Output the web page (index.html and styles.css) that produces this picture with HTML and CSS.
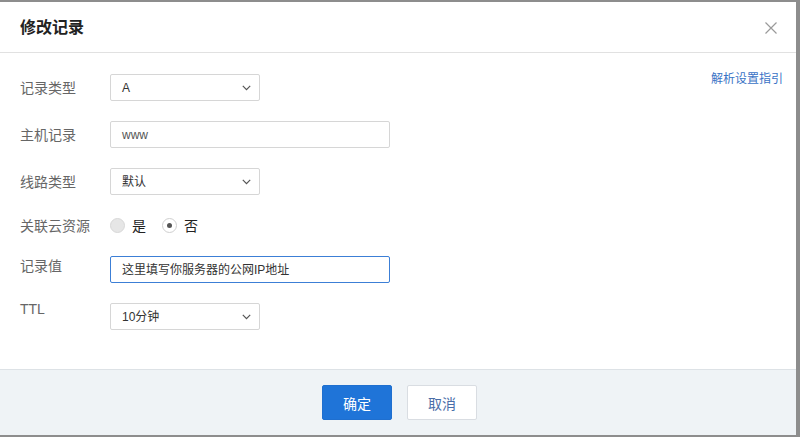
FILE: index.html
```html
<!DOCTYPE html>
<html lang="zh-CN">
<head>
<meta charset="utf-8">
<title>修改记录</title>
<link rel="stylesheet" href="styles.css">
</head>
<body>
<div class="dialog">
  <div class="dlg-header">
    <h2 class="dlg-title">修改记录</h2>
    <span class="dlg-close" aria-label="关闭">
      <svg width="12" height="12" viewBox="0 0 12 12"><path d="M0.5 0.5L11.5 11.5M11.5 0.5L0.5 11.5" stroke="#9a9a9a" stroke-width="1.2" fill="none"/></svg>
    </span>
  </div>
  <div class="dlg-body">
    <div class="form">
      <div class="row">
        <div class="label">记录类型</div>
        <div class="select"><span class="val">A</span><svg class="chev" width="9" height="6" viewBox="0 0 9 6"><path d="M0.8 0.8L4.5 4.6L8.2 0.8" stroke="#555" stroke-width="1.2" fill="none"/></svg></div>
      </div>
      <div class="row">
        <div class="label">主机记录</div>
        <div class="input"><span class="val muted">www</span></div>
      </div>
      <div class="row">
        <div class="label">线路类型</div>
        <div class="select"><span class="val">默认</span><svg class="chev" width="9" height="6" viewBox="0 0 9 6"><path d="M0.8 0.8L4.5 4.6L8.2 0.8" stroke="#555" stroke-width="1.2" fill="none"/></svg></div>
      </div>
      <div class="row row-radio">
        <div class="label">关联云资源</div>
        <div class="radios">
          <span class="radio off"></span><span class="radio-text">是</span>
          <span class="radio on"><span class="dot"></span></span><span class="radio-text">否</span>
        </div>
      </div>
      <div class="row row-top">
        <div class="label">记录值</div>
        <div class="input focus"><span class="val">这里填写你服务器的公网IP地址</span></div>
      </div>
      <div class="row row-top">
        <div class="label label-raised">TTL</div>
        <div class="select"><span class="val">10分钟</span><svg class="chev" width="9" height="6" viewBox="0 0 9 6"><path d="M0.8 0.8L4.5 4.6L8.2 0.8" stroke="#555" stroke-width="1.2" fill="none"/></svg></div>
      </div>
    </div>
    <a class="guide" href="#">解析设置指引</a>
  </div>
  <div class="dlg-footer">
    <button class="btn btn-primary">确定</button>
    <button class="btn btn-default">取消</button>
  </div>
</div>
</body>
</html>
```
FILE: styles.css
```css
* { box-sizing: border-box; }
html, body {
  margin: 0;
  padding: 0;
  width: 800px;
  height: 437px;
  overflow: hidden;
  background: #8d8d8d;
  font-family: "Liberation Sans", "Noto Sans CJK SC", sans-serif;
}
.dialog {
  margin-top: 2px;
  width: 796px;
  height: 433px;
  background: #fff;
  display: flex;
  flex-direction: column;
}
.dlg-header {
  height: 51px;
  border-bottom: 1px solid #e1e1e1;
  display: flex;
  align-items: center;
  justify-content: space-between;
  padding: 2px 19px 0 20px;
  flex: none;
}
.dlg-title {
  margin: 0;
  font-size: 16px;
  font-weight: bold;
  color: #222;
  line-height: 20px;
}
.dlg-close {
  display: flex;
  width: 12px;
  height: 12px;
}
.dlg-body {
  flex: 1;
  display: flex;
  justify-content: space-between;
  padding: 21px 13px 0 20px;
}
.form {
  display: flex;
  flex-direction: column;
  gap: 20px;
}
.row {
  display: flex;
  align-items: center;
  height: 27px;
}
.row-radio { height: 21px; }
.row-top { align-items: flex-start; }
.label {
  width: 90px;
  font-size: 14px;
  line-height: 20px;
  color: #666;
}
.label-raised { margin-top: -4px; }
.select, .input {
  height: 27px;
  border: 1px solid #d6d6d6;
  border-radius: 2px;
  display: flex;
  align-items: center;
  justify-content: space-between;
  padding: 0 8px 0 11px;
  font-size: 12px;
  color: #333;
  background: #fff;
}
.select { width: 150px; }
.input { width: 280px; }
.input.focus { border-color: #3c7fd6; }
.val { line-height: 16px; }
.val.muted { color: #555; }
.chev { flex: none; margin-top: 1px; }
.radios {
  display: flex;
  align-items: center;
}
.radio {
  width: 15px;
  height: 15px;
  border-radius: 50%;
  border: 1px solid #d8d8d8;
  display: flex;
  align-items: center;
  justify-content: center;
}
.radio.off { background: #e6e6e6; }
.radio.on { background: #fff; border-color: #cfcfcf; }
.radio .dot {
  width: 5px;
  height: 5px;
  border-radius: 50%;
  background: #555;
}
.radio-text {
  font-size: 14px;
  color: #222;
  margin: 0 16px 0 7px;
  line-height: 20px;
}
.guide {
  font-size: 12px;
  color: #3a73c5;
  text-decoration: none;
  line-height: 16px;
  margin-top: -3px;
  align-self: flex-start;
}
.dlg-footer {
  height: 66px;
  flex: none;
  border-top: 1px solid #dde2e6;
  background: #eff3f6;
  display: flex;
  justify-content: center;
  align-items: flex-start;
  gap: 15px;
  padding-top: 15px;
  padding-left: 3px;
}
.btn {
  width: 70px;
  height: 35px;
  border-radius: 2px;
  font-size: 14px;
  font-family: "Liberation Sans", "Noto Sans CJK SC", sans-serif;
  cursor: pointer;
  padding: 0;
}
.btn-primary {
  background: #1f74d8;
  border: 1px solid #1f6fcf;
  color: #fff;
}
.btn-default {
  background: #fff;
  border: 1px solid #d9dde2;
  color: #4a6ea8;
}
```
